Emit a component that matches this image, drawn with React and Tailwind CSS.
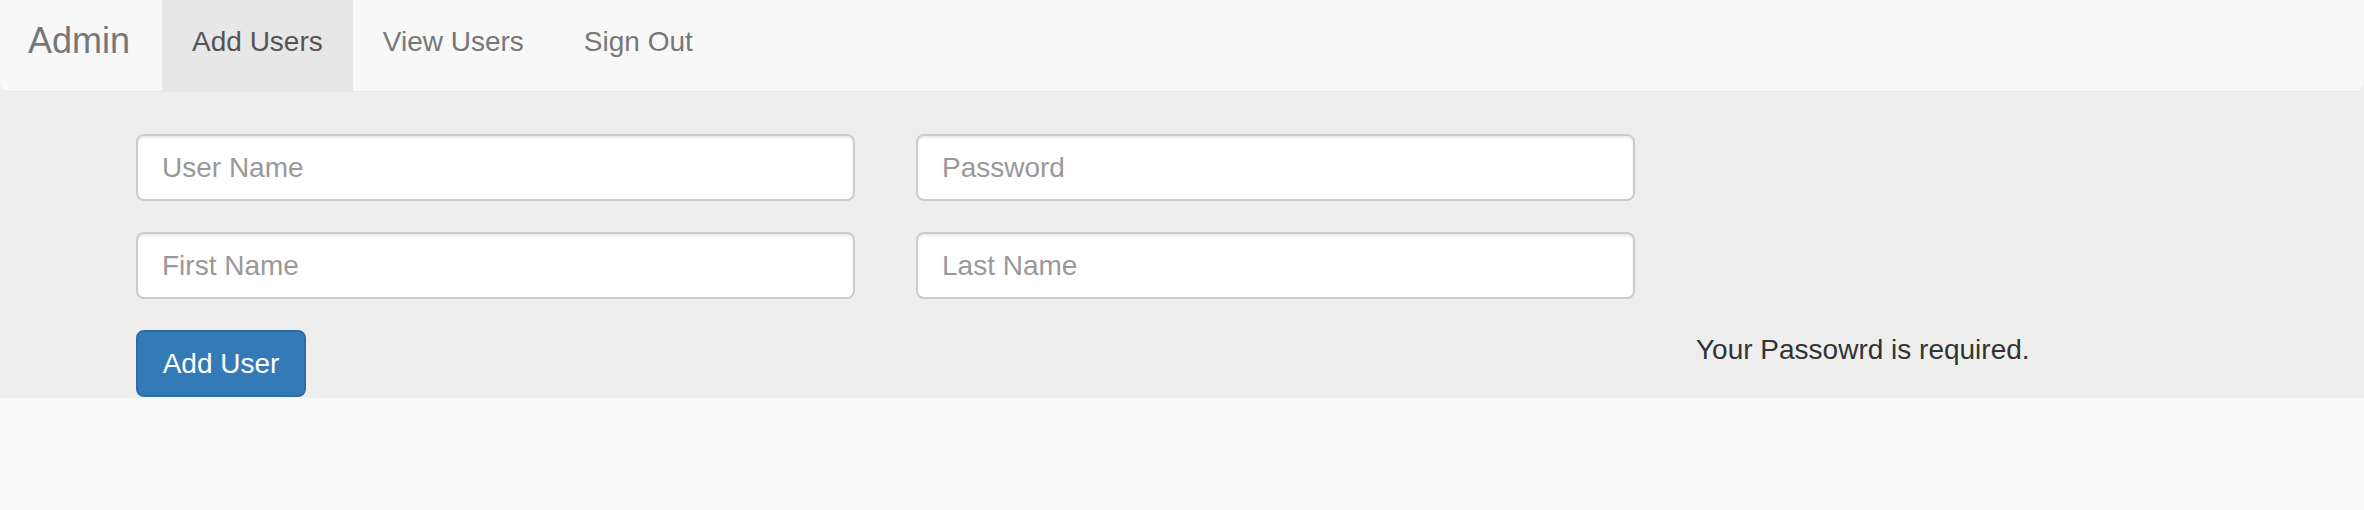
import React from "react";

export default function App() {
  const font = "font-['Liberation_Sans','Helvetica_Neue',Arial,sans-serif]";
  return (
    <div className={`min-h-[510px] bg-[#fafafa] ${font}`}>
      <div className="bg-[#eeeeee] pb-px">
        <nav className="h-[92px] flex bg-[#f8f8f8] border-b border-[#e7e7e7] rounded-b-lg">
          <a className="flex items-center pl-[28px] pr-[32px] pb-[9px] text-[36px] text-[#777777]">Admin</a>
          <ul className="flex h-full">
            <li className="flex items-center px-[30px] pb-[7px] text-[28px] text-[#555555] bg-[#e7e7e7]">Add Users</li>
            <li className="flex items-center px-[30px] pb-[7px] text-[28px] text-[#777777]">View Users</li>
            <li className="flex items-center px-[30px] pb-[7px] text-[28px] text-[#777777]">Sign Out</li>
          </ul>
        </nav>
        <div className="pl-[136px] pt-[42px] grid grid-cols-[719px_719px_1fr] gap-x-[61px] gap-y-[31px]">
          <input
            placeholder="User Name"
            className="h-[67px] w-full border-2 border-[#cccccc] rounded-lg px-6 text-[28px] text-[#555] placeholder:text-[#999999] bg-white shadow-[inset_0_2px_2px_rgba(0,0,0,0.075)] outline-none"
          />
          <input
            placeholder="Password"
            type="password"
            className="h-[67px] w-full border-2 border-[#cccccc] rounded-lg px-6 text-[28px] text-[#555] placeholder:text-[#999999] bg-white shadow-[inset_0_2px_2px_rgba(0,0,0,0.075)] outline-none"
          />
          <div />
          <input
            placeholder="First Name"
            className="h-[67px] w-full border-2 border-[#cccccc] rounded-lg px-6 text-[28px] text-[#555] placeholder:text-[#999999] bg-white shadow-[inset_0_2px_2px_rgba(0,0,0,0.075)] outline-none"
          />
          <input
            placeholder="Last Name"
            className="h-[67px] w-full border-2 border-[#cccccc] rounded-lg px-6 text-[28px] text-[#555] placeholder:text-[#999999] bg-white shadow-[inset_0_2px_2px_rgba(0,0,0,0.075)] outline-none"
          />
          <div />
          <div>
            <button className="h-[67px] w-[170px] border-2 border-[#2e6da4] bg-[#337ab7] text-white text-[28px] rounded-lg">
              Add User
            </button>
          </div>
          <div />
          <p className="text-[28px] leading-[40px] text-[#333333]">Your Passowrd is required.</p>
        </div>
      </div>
    </div>
  );
}
